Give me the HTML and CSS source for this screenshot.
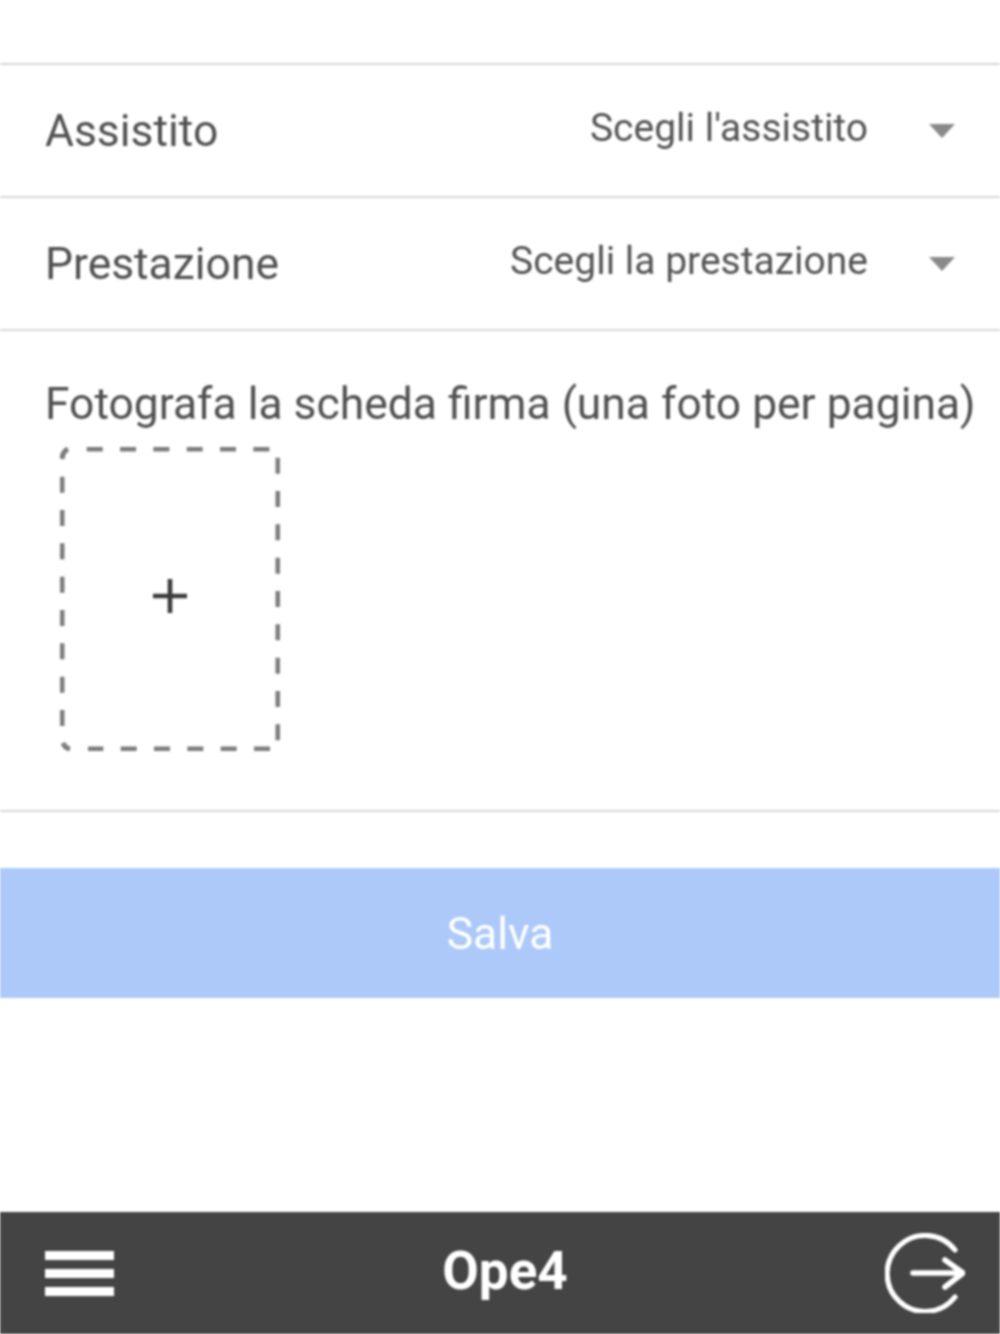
FILE: index.html
```html
<!DOCTYPE html>
<html lang="it">
<head>
<meta charset="utf-8">
<title>Ope4</title>
<link rel="stylesheet" href="styles.css">
</head>
<body>
<div class="app">
  <main class="form">
    <div class="row">
      <span class="label">Assistito</span>
      <div class="select">
        <span class="placeholder">Scegli l'assistito</span>
        <span class="arrow"></span>
      </div>
    </div>
    <div class="row">
      <span class="label">Prestazione</span>
      <div class="select">
        <span class="placeholder">Scegli la prestazione</span>
        <span class="arrow"></span>
      </div>
    </div>
    <div class="photo-row">
      <div class="label photo-label">Fotografa la scheda firma (una foto per pagina)</div>
      <div class="upload">
        <svg class="upload-frame" width="220" height="304" viewBox="0 0 220 304" aria-hidden="true">
          <g fill="none" stroke="#7c7c7c" stroke-width="5">
            <path d="M26.700 2H210" stroke-dasharray="16 17.330"/>
            <path d="M218 10.700V294" stroke-dasharray="16 17.330"/>
            <path d="M210 302H28" stroke-dasharray="16 17.330"/>
            <path d="M2 279V29" stroke-dasharray="16 17.330"/>
            <path d="M2 12Q2.500 4.500 8 2"/>
            <path d="M3 296Q5 301 10 302"/>
          </g>
        </svg>
        <svg class="plus" width="34" height="34" viewBox="0 0 34 34" aria-hidden="true">
          <path d="M0 17H34M17 0V34" stroke="#3a3a3a" stroke-width="4.600" fill="none"/>
        </svg>
      </div>
    </div>
    <button class="save" type="button">Salva</button>
  </main>
  <footer class="tabbar">
    <div class="burger"><i></i><i></i><i></i></div>
    <div class="title">Ope4</div>
    <svg class="logout" width="80" height="80" viewBox="0 0 80 80" aria-hidden="true">
      <path d="M70 17A38 38 0 1 0 70 64" fill="none" stroke="#fff" stroke-width="5.200" stroke-linecap="round"/>
      <path d="M28 40H77M60 27L78 40L60 54" fill="none" stroke="#fff" stroke-width="5.600" stroke-linecap="round" stroke-linejoin="round"/>
    </svg>
  </footer>
</div>
</body>
</html>
```
FILE: styles.css
```css
* { box-sizing: border-box; }
html, body { margin: 0; padding: 0; background: #fff; }
.app {
  width: 1000px;
  height: 1334px;
  display: flex;
  flex-direction: column;
  font-family: Roboto, "Liberation Sans", sans-serif;
  color: #555;
  overflow: hidden;
  filter: blur(1px);
}
.form {
  flex: 1;
  padding-top: 63px;
  display: flex;
  flex-direction: column;
}
.row {
  height: 133px;
  border-top: 2px solid #d8d8d8;
  padding: 0 44px 0 45px;
  display: flex;
  align-items: center;
  justify-content: space-between;
}
.row .label { margin-top: 1px; }
.label { font-size: 44.4px; line-height: 50px; color: #505050; }
.select { display: flex; align-items: center; margin-right: 1px; }
.placeholder { font-size: 39px; line-height: 44px; color: #545454; margin-bottom: 6px; }
.arrow {
  width: 0;
  height: 0;
  margin-left: 61px;
  border-left: 13.500px solid transparent;
  border-right: 13.500px solid transparent;
  border-top: 14px solid #8a8a8a;
}
.photo-row {
  height: 483px;
  border-top: 2px solid #d8d8d8;
  border-bottom: 2px solid #d8d8d8;
  padding: 48px 0 0 45px;
}
.photo-label { white-space: nowrap; }
.upload {
  position: relative;
  width: 220px;
  height: 304px;
  margin: 18px 0 0 15px;
  display: flex;
  align-items: center;
  justify-content: center;
  padding-bottom: 6px;
}
.upload-frame { position: absolute; inset: 0; }
.save {
  margin-top: 56px;
  height: 130px;
  width: 100%;
  border: 0;
  background: #adc9f9;
  color: #fff;
  font-family: inherit;
  font-size: 44.4px;
  padding: 2px 0 0;
}
.tabbar {
  height: 122px;
  background: #444;
  display: flex;
  align-items: center;
  justify-content: space-between;
  padding: 0 35px 0 45px;
  position: relative;
}
.burger { width: 69px; display: flex; flex-direction: column; gap: 9px; }
.burger i { display: block; height: 9px; background: #fff; }
.title {
  position: absolute;
  left: 0;
  right: 0;
  text-align: center;
  padding: 0 0 4px 10px;
  font-size: 53px;
  font-weight: 700;
  color: #fff;
}
.logout { display: block; }
```
